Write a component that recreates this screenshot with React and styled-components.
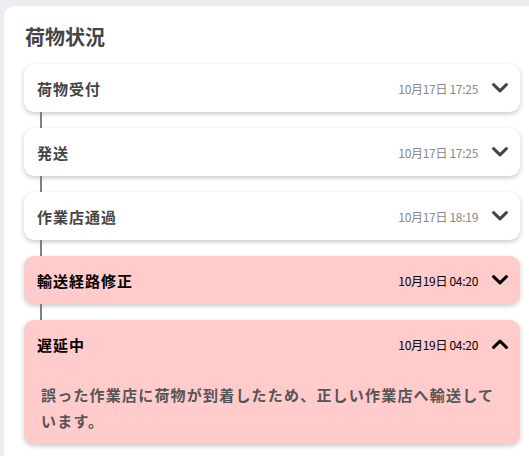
import React, { useState } from 'react';
import styled, { createGlobalStyle } from 'styled-components';

const GlobalStyle = createGlobalStyle`
  html, body {
    margin: 0;
    padding: 0;
    background: #ececf1;
    overflow: hidden;
  }
  body {
    font-family: "Noto Sans CJK JP", "Noto Sans", sans-serif;
  }
`;

const events = [
  { title: '荷物受付', date: '10月17日 17:25' },
  { title: '発送', date: '10月17日 17:25' },
  { title: '作業店通過', date: '10月17日 18:19' },
  { title: '輸送経路修正', date: '10月19日 04:20', alert: true },
  {
    title: '遅延中',
    date: '10月19日 04:20',
    alert: true,
    detail: '誤った作業店に荷物が到着したため、正しい作業店へ輸送しています。',
  },
];

const Chevron = ({ up }) => (
  <svg width="16" height="10" viewBox="0 0 16 10">
    <path
      d={up ? 'M1.6 8.4 L8 2.2 L14.4 8.4' : 'M1.6 1.6 L8 7.8 L14.4 1.6'}
      fill="none"
      stroke="currentColor"
      strokeWidth="3"
      strokeLinecap="round"
      strokeLinejoin="round"
    />
  </svg>
);

const App = () => {
  const [open, setOpen] = useState(4);

  return (
    <>
      <GlobalStyle />
      <Panel>
        <Heading>荷物状況</Heading>
        <Timeline>
          {events.map((ev, i) => (
            <React.Fragment key={i}>
              {i > 0 && <Connector />}
              <Card $alert={ev.alert}>
                <Header onClick={() => setOpen(open === i ? -1 : i)}>
                  <Title $alert={ev.alert}>{ev.title}</Title>
                  <Date $alert={ev.alert}>{ev.date}</Date>
                  <Toggle $alert={ev.alert}>
                    <Chevron up={open === i && !!ev.detail} />
                  </Toggle>
                </Header>
                {open === i && ev.detail && <Detail>{ev.detail}</Detail>}
              </Card>
            </React.Fragment>
          ))}
        </Timeline>
      </Panel>
    </>
  );
};

const Panel = styled.div`
  margin: 6px 0 0 4px;
  width: 540px;
  min-height: 460px;
  background: #fff;
  border-radius: 10px;
  padding: 16px 20px 20px 20px;
  box-sizing: border-box;
`;

const Heading = styled.h2`
  margin: 0 0 12px 1px;
  font-size: 20px;
  line-height: 30px;
  font-weight: 700;
  color: #444;
`;

const Timeline = styled.div`
  display: flex;
  flex-direction: column;
  width: 496px;
`;

const Connector = styled.div`
  width: 2px;
  height: 16px;
  margin-left: 16px;
  background: #808080;
`;

const Card = styled.div`
  background: ${(p) => (p.$alert ? '#ffcbcb' : '#fff')};
  border-radius: 10px;
  box-shadow: 0 2px 5px rgba(0, 0, 0, 0.22);
`;

const Header = styled.div`
  display: flex;
  align-items: center;
  height: 48px;
  padding: 0 12px 0 13px;
  cursor: pointer;
`;

const Title = styled.span`
  flex: 1;
  font-size: 15px;
  font-weight: 700;
  letter-spacing: 1px;
  color: ${(p) => (p.$alert ? '#000' : '#444')};
`;

const Date = styled.span`
  font-size: 12px;
  color: ${(p) => (p.$alert ? '#000' : '#888')};
  margin-right: 14px;
  letter-spacing: -0.3px;
`;

const Toggle = styled.span`
  display: flex;
  width: 16px;
  color: ${(p) => (p.$alert ? '#000' : '#444')};
`;

const Detail = styled.p`
  margin: 0;
  padding: 14px 12px 10px 17px;
  font-size: 15px;
  line-height: 26px;
  font-weight: 700;
  letter-spacing: 1.2px;
  color: #555;
`;

export default App;
